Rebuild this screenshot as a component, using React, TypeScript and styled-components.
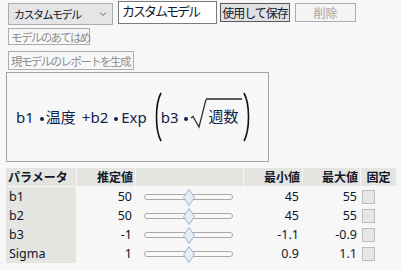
import React from 'react';
import styled, { createGlobalStyle } from 'styled-components';

const GlobalStyle = createGlobalStyle`
  html, body {
    margin: 0;
    padding: 0;
    background: #f7f7f7;
  }
  body {
    font-family: "Noto Sans", "Noto Sans CJK JP", sans-serif;
    color: #10182e;
  }
`;

const Page = styled.div`
  width: 401px;
  height: 270px;
  background: #f7f7f7;
  display: flex;
  flex-direction: column;
  overflow: hidden;
`;

const TopBar = styled.div`
  display: flex;
  align-items: flex-start;
  padding: 1px 0 0 8px;
  height: 27px;
  box-sizing: border-box;
`;

const Dropdown = styled.div`
  margin-top: 2px;
  width: 105px;
  height: 22px;
  box-sizing: border-box;
  border: 1px solid #adadad;
  background: #e5e5e5;
  display: flex;
  align-items: center;
  justify-content: space-between;
  padding: 0 5px 0 5px;
  font-size: 11px;
  letter-spacing: -1.5px;
`;

const TextBox = styled.div`
  margin-left: 5px;
  width: 99px;
  height: 23px;
  box-sizing: border-box;
  border: 1px solid #7a7a7a;
  background: #fff;
  font-size: 13px;
  letter-spacing: -2px;
  line-height: 19px;
  padding-left: 3px;
  overflow: hidden;
  white-space: nowrap;
`;

const Button = styled.div<{ $disabled?: boolean; $primary?: boolean; $w: number; $h: number }>`
  width: ${(p) => p.$w}px;
  height: ${(p) => p.$h}px;
  box-sizing: border-box;
  border: 1px solid ${(p) => (p.$primary ? '#595959' : '#adadad')};
  background: ${(p) => (p.$primary ? '#e1e1e1' : p.$disabled ? '#f4f4f4' : '#f7f7f7')};
  color: ${(p) => (p.$primary ? '#10182e' : '#8d8d8d')};
  display: flex;
  align-items: center;
  justify-content: center;
  white-space: nowrap;
  font-size: 12px;
`;

const SaveButton = styled(Button)`
  margin: 2px 0 0 3px;
  letter-spacing: -1px;
`;

const DeleteButton = styled(Button)`
  margin: 2px 0 0 5px;
  color: #a2a2a2;
`;

const ActionButton = styled(Button)<{ $top: number }>`
  margin: ${(p) => p.$top}px 0 0 8px;
  font-size: 11.5px;
  letter-spacing: -1.6px;
  justify-content: flex-start;
  padding-left: 2px;
`;

const FormulaBox = styled.div`
  margin: 2px 0 0 6px;
  width: 263px;
  height: 90px;
  box-sizing: border-box;
  border: 1px solid #a3a3a3;
  background: #f7f7f7;
  display: flex;
  align-items: center;
  padding-left: 9px;
  font-size: 15px;
  color: #10244a;
`;

const Term = styled.span<{ $ml?: number }>`
  margin-left: ${(p) => p.$ml ?? 0}px;
  line-height: 20px;
  white-space: nowrap;
`;

const Dot = styled.span<{ $ml: number }>`
  width: 4px;
  height: 4px;
  border-radius: 50%;
  background: #10244a;
  margin-left: ${(p) => p.$ml}px;
  margin-top: 3px;
  flex: none;
`;

const Paren = styled.svg<{ $ml: number }>`
  margin-left: ${(p) => p.$ml}px;
  flex: none;
`;

const Radical = styled.span`
  display: flex;
  align-items: flex-start;
  margin-left: 2px;
  height: 34px;
  margin-top: -4px;
`;

const Radicand = styled.span`
  margin-left: -1px;
  border-top: 2px solid #5a5a5a;
  padding: 6px 3px 0 3px;
  line-height: 20px;
`;

const Table = styled.div`
  margin: 6px 0 0 6px;
  display: grid;
  grid-template-columns: 70px 58px 107px 58px 57px 35px;
  column-gap: 1px;
  row-gap: 0;
  font-size: 12.5px;
`;

const HeadCell = styled.div<{ $align?: string }>`
  height: 18px;
  background: #e4e4e0;
  font-weight: 700;
  font-size: 12px;
  display: flex;
  align-items: center;
  justify-content: ${(p) => p.$align ?? 'flex-end'};
  padding: 0 2px;
  margin-bottom: 1px;
  white-space: nowrap;
`;

const NameCell = styled.div`
  height: 19px;
  background: #e4e4e0;
  display: flex;
  align-items: center;
  padding-left: 3px;
`;

const NumCell = styled.div<{ $pr: number }>`
  height: 19px;
  display: flex;
  align-items: center;
  justify-content: flex-end;
  padding-right: ${(p) => p.$pr}px;
`;

const SliderCell = styled.div`
  height: 19px;
  display: flex;
  align-items: center;
  padding-left: 8px;
`;

const Track = styled.div`
  position: relative;
  width: 89px;
  height: 6px;
  box-sizing: border-box;
  border: 1px solid #a9a9a9;
  border-radius: 3px;
  background: #f9f9f9;
`;

const Thumb = styled.svg`
  position: absolute;
  left: 38px;
  top: -6px;
`;

const CheckCell = styled.div`
  height: 19px;
  display: flex;
  align-items: center;
  padding-left: 1px;
`;

const Check = styled.div`
  width: 13px;
  height: 14px;
  box-sizing: border-box;
  border: 1px solid #bdbdbd;
  background: #e7e7e7;
`;

type Param = { name: string; est: string; min: string; max: string };

const params: Param[] = [
  { name: 'b1', est: '50', min: '45', max: '55' },
  { name: 'b2', est: '50', min: '45', max: '55' },
  { name: 'b3', est: '-1', min: '-1.1', max: '-0.9' },
  { name: 'Sigma', est: '1', min: '0.9', max: '1.1' },
];

const Chevron = () => (
  <svg width="8" height="6" viewBox="0 0 8 6">
    <path d="M1 1.5 L4 4.5 L7 1.5" fill="none" stroke="#606060" strokeWidth="1" />
  </svg>
);

const LeftParen = () => (
  <Paren $ml={8} width="7" height="50" viewBox="0 0 7 50">
    <path d="M6 1 C0 12 0 38 6 49" fill="none" stroke="#111" strokeWidth="1.6" />
  </Paren>
);

const RightParen = () => (
  <Paren $ml={1} width="7" height="50" viewBox="0 0 7 50">
    <path d="M1 1 C7 12 7 38 1 49" fill="none" stroke="#111" strokeWidth="1.6" />
  </Paren>
);

const App: React.FC = () => {
  return (
    <Page>
      <GlobalStyle />
      <TopBar>
        <Dropdown>
          <span>カスタムモデル</span>
          <Chevron />
        </Dropdown>
        <TextBox>カスタムモデル</TextBox>
        <SaveButton $primary $w={70} $h={19}>使用して保存</SaveButton>
        <DeleteButton $disabled $w={61} $h={19}>削除</DeleteButton>
      </TopBar>
      <ActionButton $top={1} $w={82} $h={17}>モデルのあてはめ</ActionButton>
      <ActionButton $top={6} $w={126} $h={19}>現モデルのレポートを生成</ActionButton>
      <FormulaBox>
        <Term>b1</Term>
        <Dot $ml={6} />
        <Term $ml={2}>温度</Term>
        <Term $ml={6}>+b2</Term>
        <Dot $ml={6} />
        <Term $ml={3}>Exp</Term>
        <LeftParen />
        <Term $ml={-1}>b3</Term>
        <Dot $ml={5} />
        <Radical>
          <svg width="17" height="34" viewBox="0 0 17 34">
            <path d="M1 20 L3 18.5 L9 29 L16 1.5" fill="none" stroke="#333" strokeWidth="1.3" />
          </svg>
          <Radicand>週数</Radicand>
        </Radical>
        <RightParen />
      </FormulaBox>
      <Table>
        <HeadCell $align="flex-start">パラメータ</HeadCell>
        <HeadCell>推定値</HeadCell>
        <HeadCell />
        <HeadCell>最小値</HeadCell>
        <HeadCell>最大値</HeadCell>
        <HeadCell $align="center">固定</HeadCell>
        {params.map((p) => (
          <React.Fragment key={p.name}>
            <NameCell>{p.name}</NameCell>
            <NumCell $pr={3}>{p.est}</NumCell>
            <SliderCell>
              <Track>
                <Thumb width="12" height="17" viewBox="0 0 12 17">
                  <path d="M6 0.5 L11.5 8.5 L6 16.5 L0.5 8.5 Z" fill="#e3ecf7" stroke="#9fb3cc" strokeWidth="1" />
                </Thumb>
              </Track>
            </SliderCell>
            <NumCell $pr={3}>{p.min}</NumCell>
            <NumCell $pr={3}>{p.max}</NumCell>
            <CheckCell>
              <Check />
            </CheckCell>
          </React.Fragment>
        ))}
      </Table>
    </Page>
  );
};

export default App;
